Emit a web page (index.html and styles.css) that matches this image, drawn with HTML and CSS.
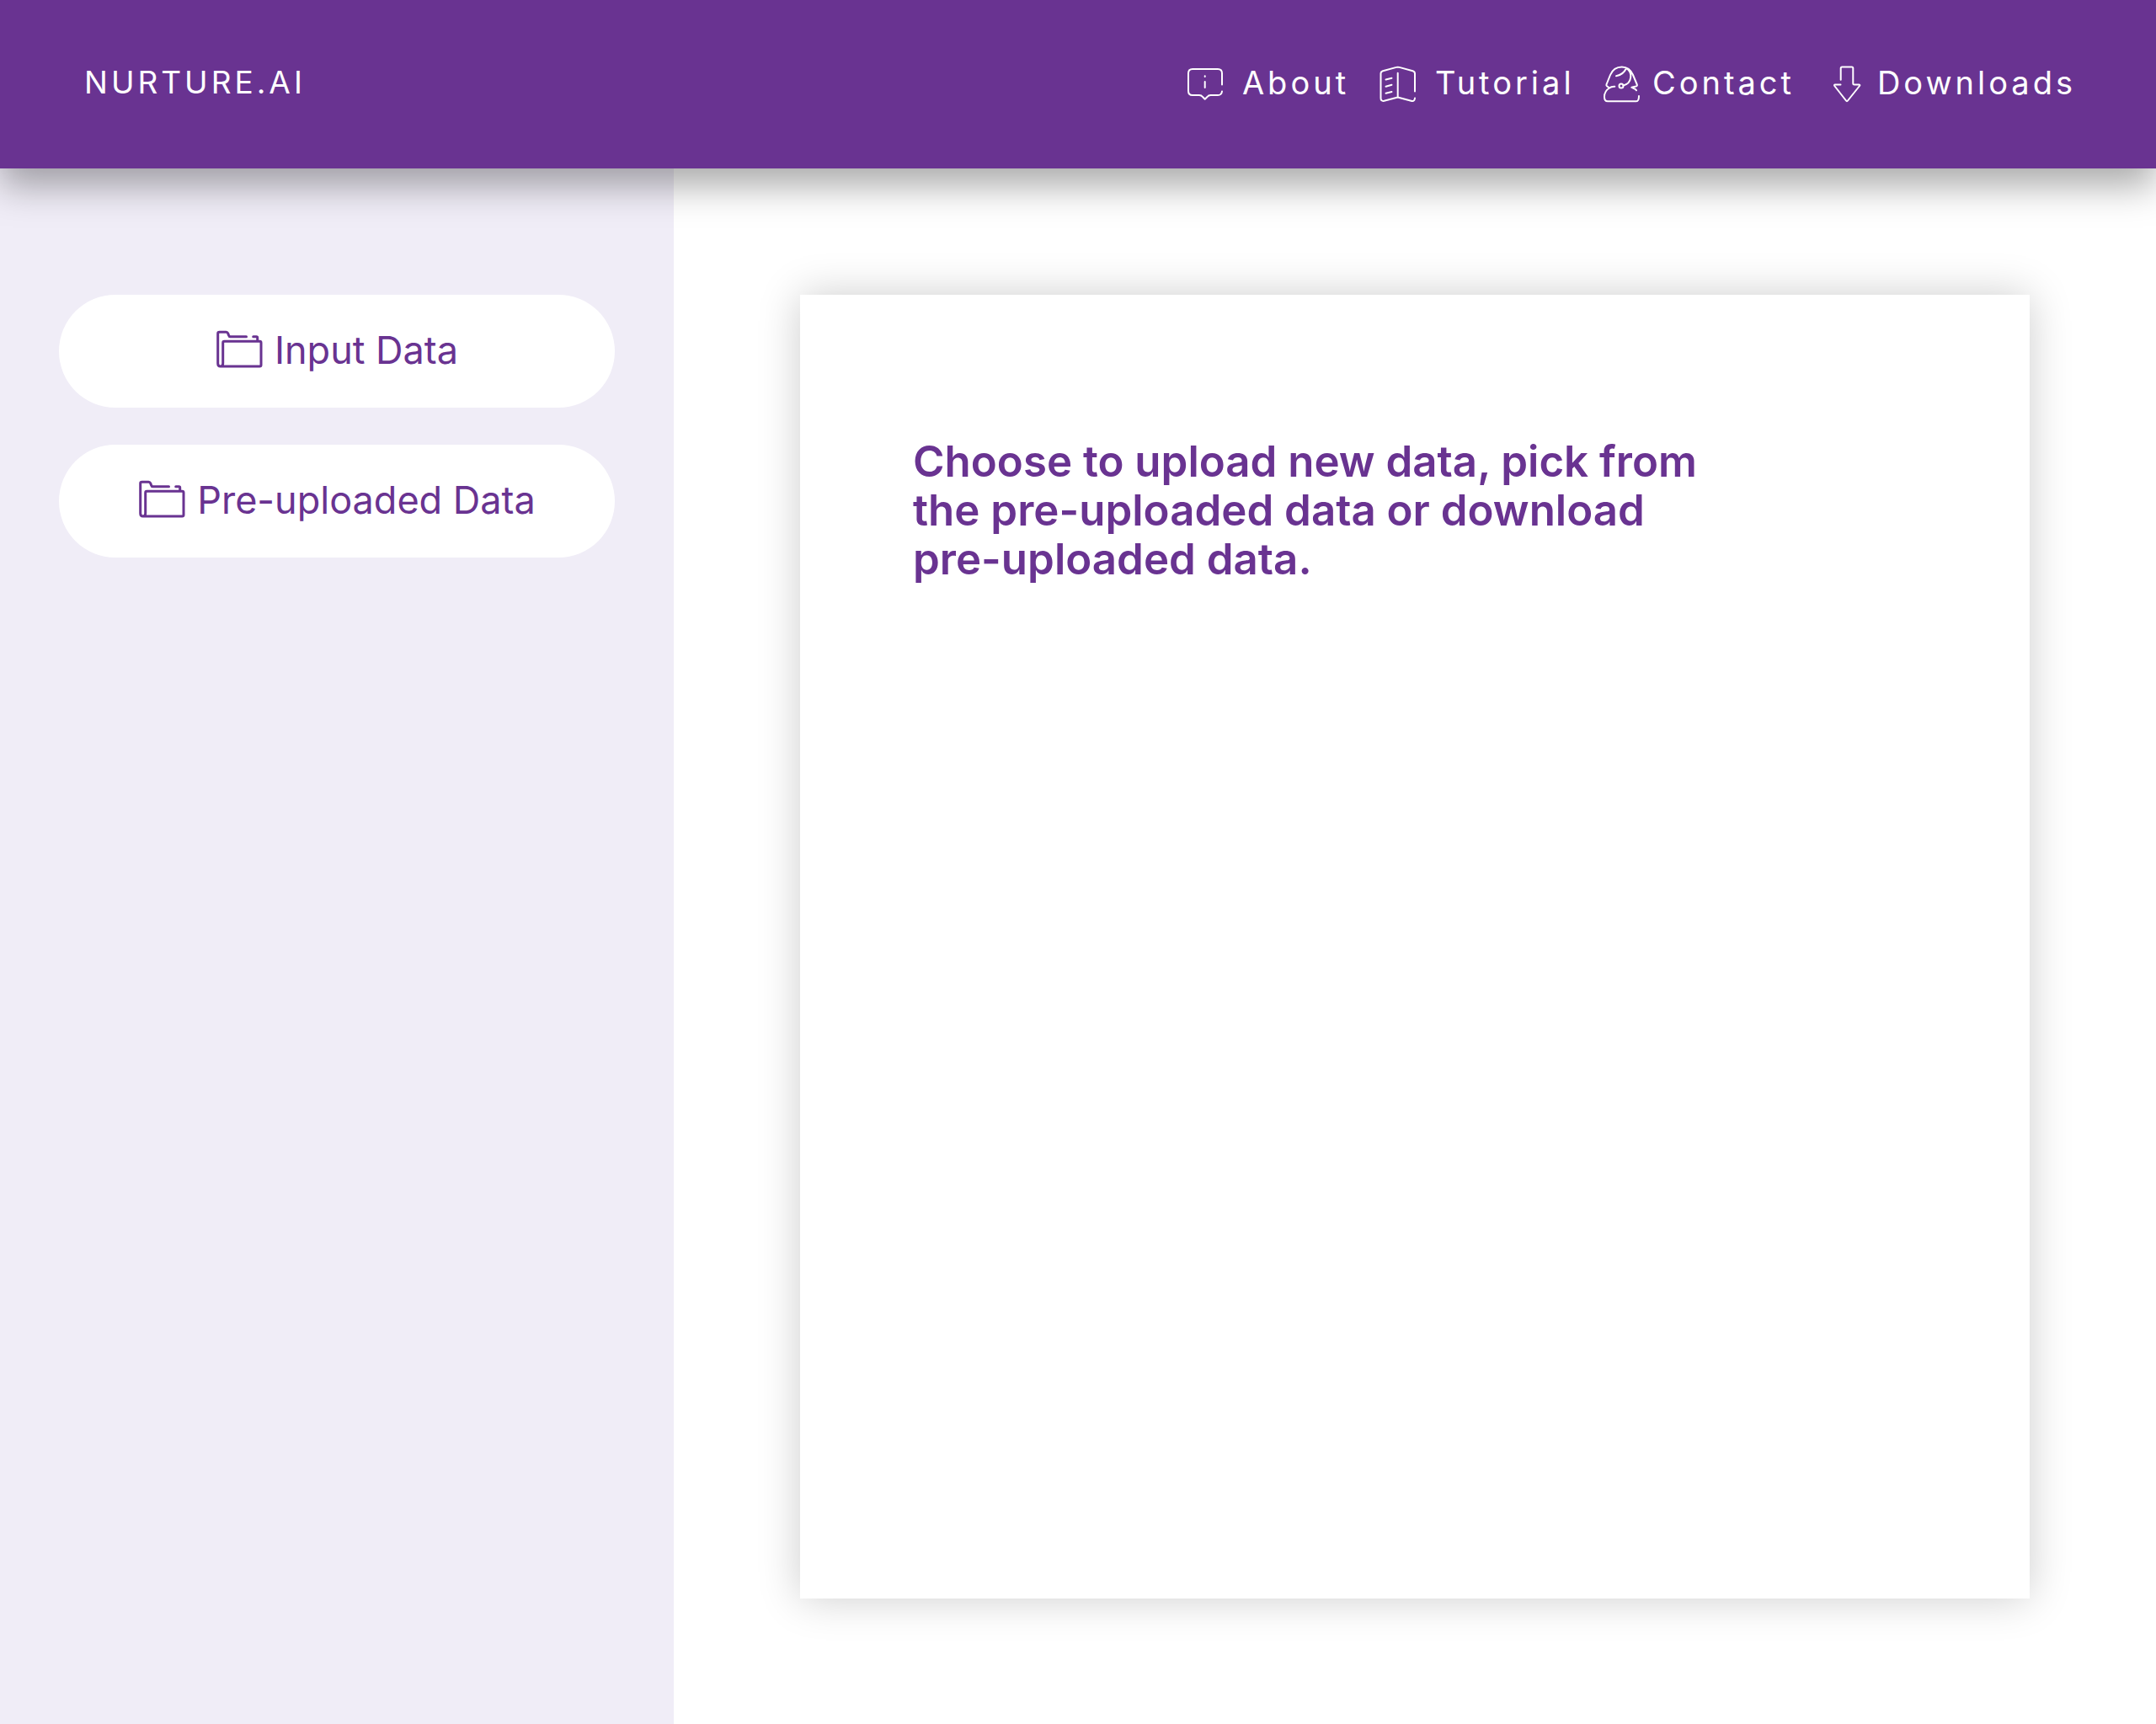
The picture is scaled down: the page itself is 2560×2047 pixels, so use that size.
FILE: index.html
```html
<!DOCTYPE html>
<html lang="en">
<head>
<meta charset="utf-8">
<meta name="viewport" content="width=device-width, initial-scale=1">
<title>NURTURE.AI</title>
<link rel="stylesheet" href="styles.css">
</head>
<body>
<svg class="symbols" aria-hidden="true">
  <symbol id="folder" viewBox="0 0 56 46">
    <path d="M36.5 7.7H17.5Q16 7.7 15.5 6L14.8 4Q14 2.3 12.500 2.300H4.500Q2.700 2.300 2.700 4V39.500Q2.700 43 5.700 43Q8.700 43 8.700 39.500V15Q8.700 13.300 10.400 13.300H52.300Q54 13.300 54 15V41.300Q54 43 52.300 43H5.700M44.700 7.700H48.500Q49.700 7.700 49.700 9V12.500"/>
  </symbol>
</svg>
<header class="topbar">
  <a class="brand" href="#">NURTURE.AI</a>
  <nav class="nav">
    <a class="nav-link" href="#about">
      <svg class="nav-icon" viewBox="0 0 44 44" aria-hidden="true"><path d="M42 22.500V9Q42 4 37 4H7Q2 4 2 9V30Q2 35 7 35H15Q17.500 35 19 37L21.700 39.800L24.500 37Q26 35 28.500 35H37Q41.500 35 42 30.500M21.700 12.200V13M21.700 19V26"/></svg>
      <span>About</span>
    </a>
    <a class="nav-link" href="#tutorial">
      <svg class="nav-icon" viewBox="0 0 44 44" aria-hidden="true"><path d="M42 30.500V9.500Q42 7 39.500 6.200L23.500 1.900Q21.700 1.400 20 1.900L4 6.200Q1.500 7 1.500 9.500V38.500Q1.500 42.500 5.500 41.800L21.700 37.500L38.500 42Q41.500 42.500 42 38.500M21.700 8.700V37.500M7.500 16.500L14.500 14.700M7.500 24.700L14.500 22.700M7.500 32.700L14.500 31"/></svg>
      <span>Tutorial</span>
    </a>
    <a class="nav-link nav-link-tight" href="#contact">
      <svg class="nav-icon" viewBox="0 0 44 44" aria-hidden="true"><path d="M13.300 24.700Q9 24.500 7 26.500L3.800 24Q3 23.300 3.600 22L8 11Q12 1.500 21.700 1.500Q31 1.500 35 11L39.800 22.500Q40.300 24 38.500 24.500L33.300 25.700L36 27Q38 27.500 39 29.300M7 26.500Q1 30 1 37Q1 42.300 5 42.300H39Q42 42.300 42 36M15 12.300C22 11 25 7.500 27 3C35 8 34 21 23.500 23.500"/><circle cx="21" cy="24" r="2.500"/></svg>
      <span>Contact</span>
    </a>
    <a class="nav-link nav-link-tight" href="#downloads">
      <svg class="nav-icon" viewBox="0 0 44 44" aria-hidden="true"><path d="M14.700 16.700V3Q14.700 1.500 16.200 1.500H27.800Q29.300 1.500 29.300 3V21Q29.300 22.500 31 22.500H36.500Q38 22.700 37 24L23 41.500Q22 42.800 21 41.500L7.300 24Q6.500 22.700 8 22.500H14.500"/></svg>
      <span>Downloads</span>
    </a>
  </nav>
</header>
<div class="layout">
  <aside class="sidebar">
    <button class="pill" type="button"><svg class="pill-icon" aria-hidden="true"><use href="#folder"/></svg><span>Input Data</span></button>
    <button class="pill" type="button"><svg class="pill-icon" aria-hidden="true"><use href="#folder"/></svg><span>Pre-uploaded Data</span></button>
  </aside>
  <main class="content">
    <section class="card">
      <h1 class="message">Choose to upload new data, pick from<br>the pre-uploaded data or download<br>pre-uploaded data.</h1>
    </section>
  </main>
</div>
</body>
</html>
```
FILE: styles.css
```css
* {
  box-sizing: border-box;
}

body {
  display: flex;
  flex-direction: column;
  min-height: 100vh;
  margin: 0;
  background: #fff;
  color: #693391;
  font-family: Inter, "Liberation Sans", sans-serif;
}

.symbols {
  position: absolute;
  width: 0;
  height: 0;
}

svg {
  fill: none;
  stroke: currentColor;
  stroke-linecap: round;
  stroke-linejoin: round;
}

.topbar {
  position: relative;
  display: flex;
  align-items: center;
  justify-content: space-between;
  padding: 72px 95px 76px 100px;
  background: #693391;
  color: #fff;
  font-size: 37px;
  line-height: 52px;
  letter-spacing: 4px;
  box-shadow: 0 20px 42px 0 rgba(0, 0, 0, 0.34);
}

.brand,
.nav-link {
  color: inherit;
  text-decoration: none;
}

.nav {
  display: grid;
  grid-template-columns: 229px 266px 267px auto;
  font-size: 38px;
}

.nav-link {
  display: flex;
  align-items: center;
  gap: 22px;
}

.nav-link-tight {
  gap: 14px;
}

.nav-icon {
  width: 44px;
  height: 44px;
  margin-top: 4px;
  stroke-width: 2;
}

.layout {
  display: flex;
  flex: 1;
}

.sidebar {
  display: flex;
  flex-direction: column;
  gap: 44px;
  width: 800px;
  padding: 150px 70px;
  background: #f0edf7;
}

.pill {
  display: flex;
  align-items: center;
  justify-content: center;
  gap: 14px;
  height: 134px;
  padding: 0 0 4px;
  border: 0;
  border-radius: 67px;
  background: #fff;
  color: inherit;
  font: inherit;
  font-size: 45px;
}

.pill-icon {
  width: 56px;
  height: 46px;
  stroke-width: 3;
}

.content {
  display: flex;
  flex: 1;
  padding: 150px 150px 149px;
}

.card {
  flex: 1;
  padding: 169px 134px;
  background: #fff;
  box-shadow: 0 0 48px rgba(0, 0, 0, 0.2);
}

.message {
  margin: 0;
  font-size: 51px;
  font-weight: 600;
  line-height: 58px;
}
```
